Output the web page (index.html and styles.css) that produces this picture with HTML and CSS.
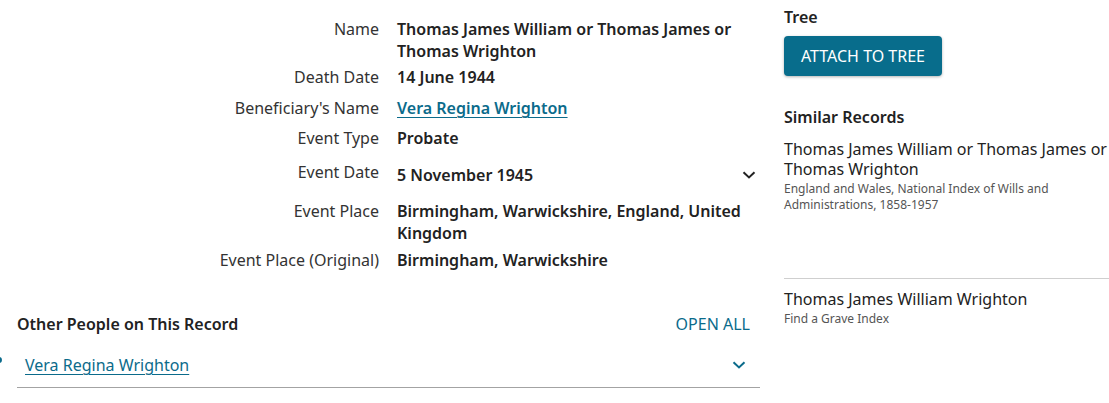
FILE: index.html
```html
<!DOCTYPE html>
<html lang="en">
<head>
<meta charset="utf-8">
<title>Record</title>
<link rel="stylesheet" href="styles.css">
</head>
<body>
<div class="page">
  <main class="main">
    <div class="facts">
      <div class="row">
        <div class="label">Name</div>
        <div class="value">Thomas James William or Thomas James or Thomas Wrighton</div>
      </div>
      <div class="row">
        <div class="label">Death Date</div>
        <div class="value">14 June 1944</div>
      </div>
      <div class="row row--link">
        <div class="label">Beneficiary's Name</div>
        <div class="value"><a href="#" class="link">Vera Regina Wrighton</a></div>
      </div>
      <div class="row">
        <div class="label">Event Type</div>
        <div class="value">Probate</div>
      </div>
      <div class="row row--toggle">
        <div class="label">Event Date</div>
        <button class="value toggle" type="button">
          <span>5 November 1945</span>
          <svg class="chev" width="14" height="8" viewBox="0 0 14 8"><polyline points="1.5,1.2 7,6.4 12.5,1.2" fill="none" stroke="#222" stroke-width="2"/></svg>
        </button>
      </div>
      <div class="row row--wrap">
        <div class="label">Event Place</div>
        <div class="value">Birmingham, Warwickshire, England, United Kingdom</div>
      </div>
      <div class="row">
        <div class="label">Event Place (Original)</div>
        <div class="value">Birmingham, Warwickshire</div>
      </div>
    </div>

    <section class="others">
      <div class="others-head">
        <h3 class="others-title">Other People on This Record</h3>
        <a href="#" class="open-all">OPEN ALL</a>
      </div>
      <div class="person">
        <a href="#" class="link person-link">Vera Regina Wrighton</a>
        <svg class="chev" width="14" height="8" viewBox="0 0 14 8"><polyline points="1.5,1.2 7,6.4 12.5,1.2" fill="none" stroke="#0b6b8b" stroke-width="2"/></svg>
      </div>
    </section>
  </main>

  <aside class="aside">
    <h3 class="aside-title">Tree</h3>
    <button class="attach" type="button">ATTACH TO TREE</button>
    <h3 class="aside-title similar-title">Similar Records</h3>
    <div class="similar">
      <div class="similar-item">
        <div class="similar-name">Thomas James William or Thomas James or Thomas Wrighton</div>
        <div class="similar-sub">England and Wales, National Index of Wills and Administrations, 1858-1957</div>
      </div>
      <div class="similar-item">
        <div class="similar-name">Thomas James William Wrighton</div>
        <div class="similar-sub">Find a Grave Index</div>
      </div>
    </div>
  </aside>
</div>
</body>
</html>
```

FILE: styles.css
```css
* { box-sizing: border-box; }

body {
  margin: 0;
  background: #fff;
  font-family: "Noto Sans", "Open Sans", sans-serif;
  font-size: 16px;
  line-height: 22px;
  color: #222;
}

.page {
  display: flex;
  gap: 24px;
  padding-left: 17px;
}

.main {
  width: 743px;
  flex: none;
  padding-top: 18px;
}

.facts {
  display: flex;
  flex-direction: column;
  gap: 4px;
}

.row {
  display: grid;
  grid-template-columns: 362px 363px;
  column-gap: 18px;
  align-items: start;
}

.row--link {
  padding: 5px 0 4px;
}

.row--wrap {
  padding-bottom: 1px;
}

.label {
  text-align: right;
  color: #333;
}

.value {
  font-weight: 600;
  color: #222;
}

.row--toggle .label {
  padding-top: 8px;
}

.toggle {
  display: flex;
  align-items: center;
  justify-content: space-between;
  height: 43px;
  padding: 0 4px 0 0;
  margin: 0;
  border: 0;
  background: none;
  font: inherit;
  font-weight: 600;
  text-align: left;
  color: #222;
}

.link {
  color: #0b6b8b;
  text-decoration: underline;
  text-underline-offset: 3px;
  text-decoration-thickness: 1px;
}

.value .link {
  font-weight: 600;
}

.others {
  margin-top: 42px;
}

.others-head {
  display: flex;
  justify-content: space-between;
  align-items: center;
  padding-right: 10px;
}

.others-title {
  margin: 0;
  font-size: 16px;
  line-height: 22px;
  font-weight: 600;
  color: #222;
}

.open-all {
  color: #0b6b8b;
  text-decoration: none;
}

.person {
  position: relative;
  display: flex;
  justify-content: space-between;
  align-items: center;
  margin-top: 6px;
  padding: 13px 14px 11px 8px;
  border-bottom: 1px solid #a3a3a3;
}

.person::before {
  content: "";
  position: absolute;
  left: -21px;
  top: 16px;
  width: 6px;
  height: 6px;
  border-radius: 50%;
  background: #0b6b8b;
}

.person-link {
  font-weight: 400;
}

.aside {
  width: 325px;
  flex: none;
  padding-top: 6px;
}

.aside-title {
  margin: 0;
  font-size: 16px;
  line-height: 22px;
  font-weight: 600;
  color: #222;
}

.attach {
  display: block;
  margin-top: 8px;
  height: 40px;
  padding: 0 17px;
  border: 0;
  border-radius: 4px;
  background: #086d8c;
  color: #fff;
  font: inherit;
  font-size: 16px;
  box-shadow: 0 1px 3px rgba(0, 0, 0, 0.3);
}

.similar-title {
  margin-top: 30px;
}

.similar-item {
  padding: 11px 0 10px;
  min-height: 150px;
}

.similar-item + .similar-item {
  border-top: 1px solid #cfcfcf;
  min-height: 0;
  padding-top: 10px;
}

.similar-name {
  font-size: 16px;
  line-height: 20px;
  color: #222;
}

.similar-sub {
  font-size: 12px;
  line-height: 16px;
  color: #555;
  margin-top: 2px;
}
```
